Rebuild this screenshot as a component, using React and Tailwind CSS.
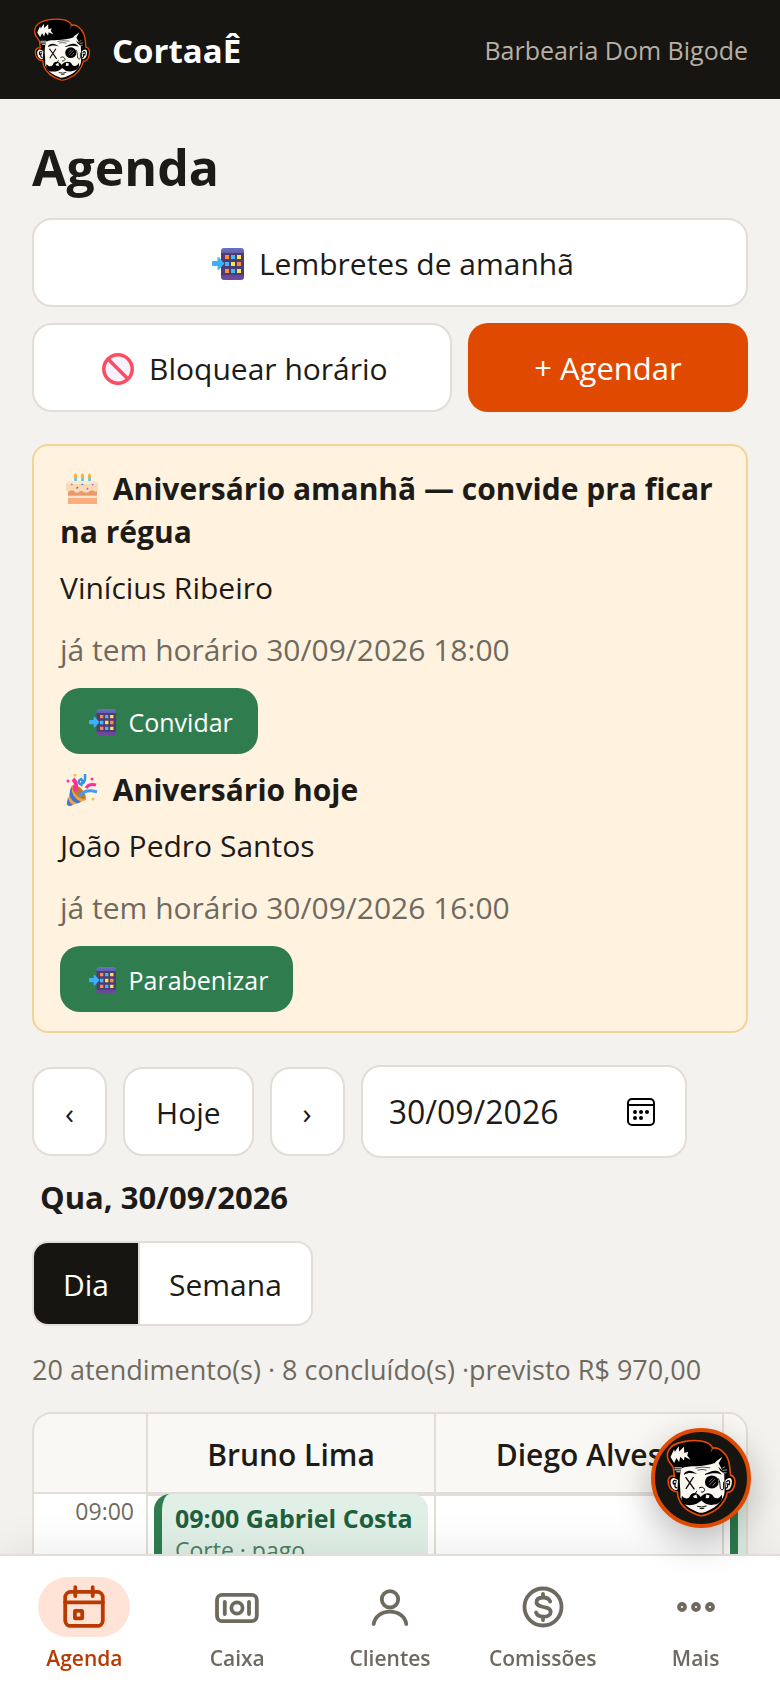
// App.jsx
import { useState } from 'react';

const APPOINTMENTS = [
  { time: '09:00', client: 'Gabriel Costa', detail: 'Corte · pago' },
];

const BIRTHDAYS = [
  { icon: CakeEmoji, title: 'Aniversário amanhã — convide pra ficar na régua', name: 'Vinícius Ribeiro', note: 'já tem horário 30/09/2026 18:00', action: 'Convidar' },
  { icon: PartyEmoji, title: 'Aniversário hoje', name: 'João Pedro Santos', note: 'já tem horário 30/09/2026 16:00', action: 'Parabenizar' },
];

const NAV = [
  { label: 'Agenda', icon: AgendaIcon },
  { label: 'Caixa', icon: CashIcon },
  { label: 'Clientes', icon: ClientIcon },
  { label: 'Comissões', icon: CoinIcon },
  { label: 'Mais', icon: MoreIcon },
];

const BTN = 'rounded-[20px] border-2 border-[#e2ddd6] bg-white pt-[21px] pb-[19px] leading-[45px]';

function Logo({ className }) {
  return (
    <svg viewBox="190 138 216 244" className={className} aria-hidden="true">
      <path d="M214 232C213 222 204 217 199 207C192 193 195 175 208 164C228 149 270 142 302 148C318 151 329 158 334 169C350 164 372 181 380 202C386 216 386 236 388 252C400 253 404 266 400 282C397 296 389 304 378 304C374 330 352 356 327 366C315 373 304 377 293 374C265 365 237 347 229 320C226 314 228 306 226 302C207 302 197 285 198 268C199 256 207 252 217 255Z"
        fill="#000" stroke="#e84b06" strokeWidth="5" strokeLinejoin="round" />
      <path d="M334 166C330 172 333 178 327 180" fill="none" stroke="#e84b06" strokeWidth="3" />
      <path d="M238 231C262 219 298 231 345 213L356 237L369 247L370 302C369 326 344 350 321 359C311 364 302 367 293 366C267 357 243 342 235 319C237 296 230 270 235 246Z" fill="#fbf8f2" />
      <path d="M221 262C211 256 204 263 205 276C207 291 216 299 226 296L228 266Z" fill="#fbf8f2" />
      <path d="M224 270C215 264 211 270 214 278L220 276C216 285 219 290 225 290" fill="none" stroke="#000" strokeWidth="4" />
      <path d="M377 263C388 256 394 263 392 276C390 290 383 298 374 296L372 267Z" fill="#fbf8f2" />
      <path d="M375 272C384 264 388 269 384 280L378 278C381 286 378 291 373 291" fill="none" stroke="#000" strokeWidth="4" />
      <path d="M205 196L216 172L218 181L230 163L231 179L246 165L247 184L259 180L256 191L266 204L248 195L246 207L235 195L231 211L223 199L216 214Z" fill="#fbf8f2" />
      <path d="M217 229H240M217 235H238M223 241H236" stroke="#fbf8f2" strokeWidth="3" />
      <path d="M341 212L363 195L352 215L363 236L350 226Z" fill="#fbf8f2" />
      <path d="M363 230L371 226M364 237L378 235M366 244L376 244" stroke="#fbf8f2" strokeWidth="2" />
      <path d="M281 230Q300 224 326 229M287 236Q301 232 315 236" fill="none" stroke="#000" strokeWidth="2" />
      <path d="M246 247C257 233 272 237 286 248C271 244 259 242 246 251Z" fill="#000" />
      <path d="M310 248C326 242 333 236 347 239C354 241 358 245 361 250C347 244 332 244 311 251Z" fill="#000" />
      <path d="M251 257L278 295M275 257L252 293" stroke="#000" strokeWidth="4" />
      <ellipse cx="331" cy="272" rx="21" ry="20" fill="#000" />
      <path d="M323 282L341 263M323 272L334 261M333 284L343 273" stroke="#b8b5ae" strokeWidth="2" />
      <path d="M350 261C357 269 355 280 357 292Q362 301 367 293V272" fill="none" stroke="#000" strokeWidth="3" />
      <path d="M292 291C300 285 309 289 309 298Q306 305 298 303M286 300Q281 302 282 307" fill="none" stroke="#000" strokeWidth="3" />
      <path d="M297 318C286 301 268 303 264 316C261 325 247 325 240 314C235 328 243 343 263 343C281 343 291 337 299 329C309 340 324 345 339 341C357 338 366 326 361 310C354 326 339 324 335 315C328 302 307 304 297 318Z" fill="#000" />
      <path d="M274 315L284 310L287 322L276 320ZM314 310L324 313L322 321L312 322Z" fill="#fbf8f2" />
      <path d="M286 346Q300 352 315 345M294 353Q301 355 308 352" fill="none" stroke="#000" strokeWidth="3" />
    </svg>
  );
}

function PhoneEmoji({ className = 'h-8 w-8 ml-[6px] mr-[7px] align-[-5px]' }) {
  return (
    <svg viewBox="0 0 32 32" className={`inline-block ${className}`} aria-hidden="true">
      <defs>
        <linearGradient id="phone" x1="0" y1="0" x2="0" y2="1">
          <stop offset="0" stopColor="#6a6fc4" />
          <stop offset=".15" stopColor="#5f62ac" />
          <stop offset=".16" stopColor="#523a73" />
          <stop offset=".83" stopColor="#483d78" />
          <stop offset=".84" stopColor="#68459b" />
          <stop offset="1" stopColor="#744a9c" />
        </linearGradient>
      </defs>
      <rect x="9" width="23" height="32" rx="3" fill="url(#phone)" />
      <path d="M13 7h4v4h-4zM25 14h4v4h-4zM13 21h4v4h-4z" fill="#ff8b3d" />
      <path d="M19 7h4v4h-4zM13 14h4v4h-4zM19 21h4v4h-4z" fill="#35c0f5" />
      <path d="M25 7h4v4h-4zM19 14h4v4h-4zM25 21h4v4h-4z" fill="#ffe148" />
      <path d="M1 13H5.500V10Q5.500 8.500 7 9.500L12 15Q12.500 15.500 12 16L7 21.500Q5.500 22.500 5.500 21V18H1Q0 18 0 17V14Q0 13 1 13Z" fill="#3cb1fb" />
    </svg>
  );
}

function BlockEmoji() {
  return (
    <svg viewBox="0 0 32 32" className="inline-block h-8 w-8 ml-[6px] mr-[7px] align-[-5px]" aria-hidden="true">
      <circle cx="16" cy="16" r="14.200" fill="#f8f1ff" stroke="#fb4d60" strokeWidth="3.500" />
      <path d="M6 6L26 26" stroke="#fb4d60" strokeWidth="3.500" />
    </svg>
  );
}

function CakeEmoji() {
  return (
    <svg viewBox="0 0 32 32" className="inline-block h-8 w-8 ml-[6px] mr-[7px] align-[-5px]" aria-hidden="true">
      <path d="M2 17H31V31H2Z" fill="#fbad7d" />
      <path d="M2 18H31V22H2Z" fill="#e99a6c" />
      <path d="M2 23H31V25H2Z" fill="#ffe3c8" />
      <path d="M8.300 4h2.500v5H8.300zM15.300 4h2.500v5h-2.500zM22.300 4h2.500v5h-2.500z" fill="#4fc4e6" />
      <path d="M0 12Q0 8 4 8H28Q32 8 32 12V17Q30 20 28 18Q26 16 24 18Q21 21 18 19Q15 17 13 19Q10 21 8 18Q5 16 4 18Q0 20 0 15Z" fill="#f3dcb7" />
      <path d="M3 8H29Q31 9 31 11H1Q1 9 3 8Z" fill="#fbe9cb" />
      <path d="M9.500 0Q13 4 9.500 5Q6 4 9.500 0M16.500 0Q20 4 16.500 5Q13 4 16.500 0M23.500 0Q27 4 23.500 5Q20 4 23.500 0" fill="#ffb02e" />
      <path d="M5 11l1.500 1M21 15l1 1.500M26 12l1.500-1" stroke="#d05bc0" strokeWidth="1.500" />
      <path d="M15.500 11l1.500 1" stroke="#4a78e0" strokeWidth="1.500" />
      <path d="M12 14l-1.500 1.500" stroke="#e8453c" strokeWidth="1.500" />
    </svg>
  );
}

function PartyEmoji() {
  return (
    <svg viewBox="0 0 32 32" className="inline-block h-8 w-8 ml-[6px] mr-[7px] align-[-5px]" aria-hidden="true">
      <path d="M6 11Q13 12 20 24L20 26L4 32Q0 32 1 29Z" fill="#f5a33a" />
      <path d="M6 12Q4 22 15 28L11 29.500Q2 26 4 16ZM2 23Q3 29 7 31L4 32Q1 32 1 29Z" fill="#3c74dd" />
      <ellipse cx="13" cy="18" rx="9" ry="4" transform="rotate(48 13 18)" fill="#c07a26" />
      <path d="M9 17Q12 10 7 5" fill="none" stroke="#f92f9c" strokeWidth="4" />
      <path d="M13 22Q20 14 31 18" fill="none" stroke="#3f9cf5" strokeWidth="3" />
      <path d="M20 14Q23 9 30 11" fill="none" stroke="#f92f9c" strokeWidth="3" />
      <path d="M19 0Q20 10 14 10Q11 7 15 5Q18 7 15 12" fill="none" stroke="#3093e8" strokeWidth="2.500" />
      <circle cx="2" cy="7" r="1.500" fill="#f92f9c" />
      <circle cx="9" cy="1" r="1.500" fill="#f6bd4b" />
      <circle cx="26" cy="5" r="1.500" fill="#f92f9c" />
      <circle cx="27" cy="25" r="1.500" fill="#f6bd4b" />
    </svg>
  );
}

function NavSvg({ children }) {
  return (
    <svg viewBox="0 0 48 48" className="h-12 w-12" fill="none" stroke="currentColor" strokeWidth="3.800"
      strokeLinecap="round" strokeLinejoin="round" aria-hidden="true">
      {children}
    </svg>
  );
}

function AgendaIcon() {
  return (
    <NavSvg>
      <rect x="5.200" y="8.900" width="37.600" height="34" rx="5.500" />
      <path d="M15.300 4.200V13M32.700 4.200V13M5.200 19.300H42.800" />
      <rect x="14.900" y="27.900" width="7.300" height="7.500" rx=".5" />
    </NavSvg>
  );
}

function CashIcon() {
  return (
    <NavSvg>
      <rect x="4" y="11.900" width="39.800" height="26.200" rx="5" />
      <circle cx="24" cy="25" r="5.600" />
      <path d="M11.800 19V31M36 19V31" />
    </NavSvg>
  );
}

function ClientIcon() {
  return (
    <NavSvg>
      <circle cx="24" cy="16.300" r="8.200" />
      <path d="M7.700 41C9 33.500 15.500 28.700 24 28.700S39 33.500 40.300 41" />
    </NavSvg>
  );
}

function CoinIcon() {
  return (
    <NavSvg>
      <circle cx="24" cy="24" r="18.500" />
      <path d="M31.200 18.500C30.200 16 27.400 14.500 24.200 14.500C20 14.500 17.500 16.300 17.500 19.200C17.500 25.800 31.700 22.200 31.700 28.900C31.700 31.800 28.600 33.600 24.500 33.600C21 33.600 18 32.200 17 29.500M24 11V14M24 34V37" />
    </NavSvg>
  );
}

function MoreIcon() {
  return (
    <NavSvg>
      <circle cx="10" cy="24" r="3" />
      <circle cx="24" cy="24" r="3" />
      <circle cx="38" cy="24" r="3" />
    </NavSvg>
  );
}

function Birthday({ icon: Icon, title, name, note, action }) {
  return (
    <div className="flex flex-col items-start">
      <h2 className="text-[30px] leading-[43px] font-bold"><Icon /> {title}</h2>
      <p className="mt-[13px]">{name}</p>
      <p className="mt-[19px] text-[#6f6a60]">{note}</p>
      <button className="mt-[17px] rounded-[20px] bg-[#2f7d4f] px-[25px] pt-[15px] pb-[13px] text-[25px] leading-[38px] text-white">
        <PhoneEmoji className="h-[27px] w-[27px] ml-1 mr-[6px] align-[-4px]" /> {action}
      </button>
    </div>
  );
}

function Schedule() {
  return (
    <div className="mt-[22px] overflow-x-auto rounded-[20px] border-2 border-[#e2ddd6] bg-white [scrollbar-width:none]">
      <table className="w-[978px] table-fixed border-separate border-spacing-0">
        <thead>
          <tr className="bg-[#f9f8f5]">
            <td className="w-[114px] border-r-2 border-b-2 border-[#e2ddd6]" />
            <th className="border-r-2 border-b-2 border-[#e2ddd6] pt-[19px] pb-[15px] leading-[44px] text-[30px] font-semibold">Bruno Lima</th>
            <th className="border-r-2 border-b-2 border-[#e2ddd6] pt-[19px] pb-[15px] leading-[44px] text-[30px] font-semibold">Diego Alves</th>
            <td className="border-b-2 border-[#e2ddd6]" />
          </tr>
        </thead>
        <tbody>
          {APPOINTMENTS.map(({ time, client, detail }) => (
            <tr key={time} className="h-40 align-top">
              <th className="border-r-2 border-[#e2ddd6] pt-[3px] pr-3 text-right text-[23px] leading-7 font-normal text-[#6f6a60]">{time}</th>
              <td className="relative border-t-2 border-r-2 border-[#e2ddd6]">
                <div className="absolute inset-x-[6px] -top-[2px] h-36 rounded-2xl border-l-8 border-[#2f7d4f] bg-[#e0f0e6] px-[13px] pt-2 text-[23px] leading-8 whitespace-nowrap text-[#1f5f3d]">
                  <strong className="block text-[25px]">{time} {client}</strong>
                  <span className="block text-[#4b8163]">{detail}</span>
                </div>
              </td>
              <td className="border-t-2 border-r-2 border-[#e2ddd6]" />
              <td className="relative border-t-2 border-[#e2ddd6]">
                <div className="absolute inset-x-[6px] -top-[2px] h-36 rounded-2xl border-l-8 border-[#2f7d4f] bg-[#e0f0e6]" />
              </td>
            </tr>
          ))}
        </tbody>
      </table>
    </div>
  );
}

export default function App() {
  const [view, setView] = useState('Dia');
  const [date, setDate] = useState('30/09/2026');
  const [tab, setTab] = useState('Agenda');

  return (
    <div className="relative flex h-screen flex-col overflow-hidden bg-[#f4f2ee] font-['Open_Sans','Noto_Sans',sans-serif] text-[30px] leading-[43px] text-[#1d1b17]">
      <header className="flex items-center bg-[#171512] px-8 py-[17px]">
        <Logo className="h-[65px] w-[60px]" />
        <span className="ml-5 pt-[2px] text-[33px] font-bold text-white">CortaaÊ</span>
        <span className="ml-auto pt-[2px] text-[25px] text-[#b8b0a4]">Barbearia Dom Bigode</span>
      </header>

      <main className="min-h-0 flex-1 overflow-y-auto px-8 pt-[33px] [scrollbar-width:none]">
        <h1 className="mb-[15px] text-[50px] leading-[71px] font-bold">Agenda</h1>

        <div className="flex flex-wrap gap-4">
          <button className={`${BTN} w-full`}><PhoneEmoji /> Lembretes de amanhã</button>
          <button className={`${BTN} grow px-8`}><BlockEmoji /> Bloquear horário</button>
          <button className="grow rounded-[20px] bg-[#e04a00] px-9 pt-[23px] pb-[21px] text-[31px] leading-[45px] text-white">+ Agendar</button>
        </div>

        <section className="mt-8 flex flex-col gap-[14px] rounded-2xl border-2 border-[#f2d398] bg-[#fff3e0] px-[26px] pt-[21px] pb-[19px]">
          {BIRTHDAYS.map((b) => <Birthday key={b.name} {...b} />)}
        </section>

        <div className="mt-8 flex items-center gap-4">
          <button className={`${BTN} px-[31px]`} aria-label="Dia anterior">‹</button>
          <button className={`${BTN} px-[31px]`}>Hoje</button>
          <button className={`${BTN} px-[31px]`} aria-label="Próximo dia">›</button>
          <label className="flex w-[326px] items-center rounded-[20px] border-2 border-[#e2ddd6] bg-white py-[22px] pr-[30px] pl-[26px]">
            <input value={date} onChange={(e) => setDate(e.target.value)} aria-label="Data"
              className="w-0 grow text-[32px] leading-[45px] outline-none" />
            <svg viewBox="0 0 28 28" className="h-7 w-7 shrink-0" fill="none" stroke="#000" strokeWidth="2" aria-hidden="true">
              <rect x="1" y="1" width="26" height="26" rx="4" />
              <path d="M1 7H27" />
              <g fill="#000" stroke="none">
                <circle cx="8" cy="14" r="2" /><circle cx="14" cy="14" r="2" /><circle cx="20" cy="14" r="2" />
                <circle cx="8" cy="20" r="2" /><circle cx="14" cy="20" r="2" />
              </g>
            </svg>
          </label>
        </div>

        <p className="mt-[18px] ml-2 text-[31px] font-bold">Qua, 30/09/2026</p>

        <div className="mt-[22px] flex w-fit overflow-hidden rounded-2xl border-2 border-[#e2ddd6] bg-white">
          {['Dia', 'Semana'].map((v) => (
            <button key={v} onClick={() => setView(v)}
              className={`border-l-2 border-[#e2ddd6] px-[29px] pt-[20px] pb-[18px] first:border-l-0 ${view === v ? 'bg-[#171512] text-white' : ''}`}>
              {v}
            </button>
          ))}
        </div>

        <p className="mt-6 text-[27px] leading-10 text-[#6f6a60]">20 atendimento(s) · 8 concluído(s) ·previsto R$ 970,00</p>

        <Schedule />
      </main>

      <nav className="relative flex border-t-2 border-[#e2ddd6] bg-white px-2 pt-[21px] pb-[15px] shadow-[0_-4px_40px_rgba(0,0,0,0.08)]">
        {NAV.map(({ label, icon: Icon }) => (
          <a key={label} href="#" onClick={() => setTab(label)}
            className={`flex flex-1 basis-0 flex-col items-center gap-[6px] text-[21px] leading-[30px] font-semibold ${tab === label ? 'text-[#b93a00]' : 'text-[#6f6a60]'}`}>
            <span className={`flex h-[60px] w-[92px] items-center justify-center rounded-full ${tab === label ? 'bg-[#ffe3d6]' : ''}`}>
              <Icon />
            </span>
            {label}
          </a>
        ))}
      </nav>

      <button aria-label="Assistente"
        className="absolute right-[29px] bottom-40 flex h-[100px] w-[100px] items-center justify-center rounded-full border-4 border-[#e04a00] bg-[#171512] shadow-[0_12px_36px_rgba(0,0,0,0.28)]">
        <Logo className="h-[80px] w-[72px]" />
      </button>
    </div>
  );
}
